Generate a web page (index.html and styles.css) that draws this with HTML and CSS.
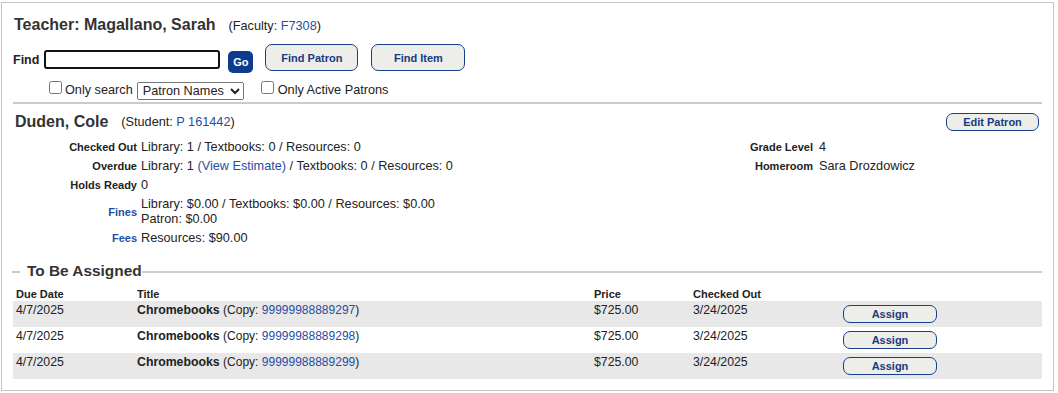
FILE: index.html
```html
<!DOCTYPE html>
<html>
<head>
<meta charset="utf-8">
<link rel="stylesheet" href="styles.css">
</head>
<body>
<div class="panel">
  <div class="head">
    <span class="head-name">Teacher: Magallano, Sarah</span>
    <span class="head-meta">(Faculty: <a class="link">F7308</a>)</span>
  </div>

  <div class="find-row">
    <label class="find-label">Find</label>
    <input class="find-input" type="text">
    <button class="go-btn">Go</button>
    <button class="btn btn-find">Find Patron</button>
    <button class="btn btn-find btn-item">Find Item</button>
  </div>

  <div class="opt-row">
    <input type="checkbox" class="cb cb-first">
    <span class="opt-text">Only search</span>
    <select class="opt-select"><option>Patron Names</option></select>
    <input type="checkbox" class="cb cb-second">
    <span class="opt-text">Only Active Patrons</span>
  </div>

  <div class="rule"></div>

  <div class="patron-head">
    <span class="patron-name">Duden, Cole</span>
    <span class="head-meta">(Student: <a class="link">P 161442</a>)</span>
    <button class="btn btn-edit">Edit Patron</button>
  </div>

  <div class="details">
    <div class="grid grid-left">
      <div class="lbl">Checked Out</div>
      <div class="val">Library: 1 / Textbooks: 0 / Resources: 0</div>
      <div class="lbl">Overdue</div>
      <div class="val">Library: 1 <a class="link">(View Estimate)</a> / Textbooks: 0 / Resources: 0</div>
      <div class="lbl">Holds Ready</div>
      <div class="val">0</div>
      <div class="lbl lbl-link">Fines</div>
      <div class="val">Library: $0.00 / Textbooks: $0.00 / Resources: $0.00<br>Patron: $0.00</div>
      <div class="lbl lbl-link">Fees</div>
      <div class="val">Resources: $90.00</div>
    </div>
    <div class="grid grid-right">
      <div class="lbl">Grade Level</div>
      <div class="val">4</div>
      <div class="lbl">Homeroom</div>
      <div class="val">Sara Drozdowicz</div>
    </div>
  </div>

  <div class="legend-row">
    <span class="legend-dash"></span>
    <span class="legend-text">To Be Assigned</span>
    <span class="legend-line"></span>
  </div>

  <table class="items">
    <colgroup>
      <col class="c-due"><col class="c-title"><col class="c-price"><col class="c-out"><col>
    </colgroup>
    <thead>
      <tr><th>Due Date</th><th>Title</th><th>Price</th><th>Checked Out</th><th></th></tr>
    </thead>
    <tbody>
      <tr class="shade">
        <td>4/7/2025</td>
        <td><b class="item-name">Chromebooks</b> <span class="copy">(Copy: <a class="link">99999988889297</a>)</span></td>
        <td>$725.00</td>
        <td>3/24/2025</td>
        <td class="act"><button class="btn btn-assign">Assign</button></td>
      </tr>
      <tr>
        <td>4/7/2025</td>
        <td><b class="item-name">Chromebooks</b> <span class="copy">(Copy: <a class="link">99999988889298</a>)</span></td>
        <td>$725.00</td>
        <td>3/24/2025</td>
        <td class="act"><button class="btn btn-assign">Assign</button></td>
      </tr>
      <tr class="shade">
        <td>4/7/2025</td>
        <td><b class="item-name">Chromebooks</b> <span class="copy">(Copy: <a class="link">99999988889299</a>)</span></td>
        <td>$725.00</td>
        <td>3/24/2025</td>
        <td class="act"><button class="btn btn-assign">Assign</button></td>
      </tr>
    </tbody>
  </table>
</div>
</body>
</html>
```

FILE: styles.css
```css
html, body {
  margin: 0;
  padding: 0;
  background: #fff;
}
body {
  font-family: "Liberation Sans", Arial, sans-serif;
  color: #222;
  font-size: 12.7px;
}
.panel {
  box-sizing: border-box;
  width: 1053px;
  margin: 2px 0 0 1px;
  border: 1px solid #c4c4c4;
  padding: 12px 11px 11px 12px;
}
.link {
  color: #1f4ea3;
  text-decoration: none;
}
.head {
  display: flex;
  align-items: baseline;
  gap: 13px;
  height: 20px;
  line-height: 20px;
}
.head-name, .patron-name {
  font-size: 16px;
  font-weight: bold;
  color: #333;
}
.head-meta {
  font-size: 12.7px;
  color: #222;
}

/* find row */
.find-row {
  display: flex;
  align-items: flex-start;
  margin-top: 9px;
  height: 28px;
}
.find-label {
  font-size: 12.5px;
  font-weight: bold;
  line-height: 15px;
  margin: 9px 0 0 -1px;
  color: #222;
}
.find-input {
  box-sizing: border-box;
  width: 176px;
  height: 19px;
  margin: 6px 0 0 5px;
  border: 2px solid #111;
  border-radius: 3px;
  padding: 0 3px;
  outline: none;
  font: 12.7px "Liberation Sans", Arial, sans-serif;
}
.go-btn {
  box-sizing: border-box;
  width: 25px;
  height: 22px;
  margin: 7px 0 0 8px;
  padding: 0;
  border: none;
  border-radius: 5px;
  background: #0d3c8e;
  color: #fff;
  font: bold 11px "Liberation Sans", Arial, sans-serif;
}
.btn {
  box-sizing: border-box;
  padding: 0;
  background: #ededea;
  border: 1px solid #173f8c;
  border-radius: 7px;
  color: #1a3a80;
  font: bold 11px "Liberation Sans", Arial, sans-serif;
}
.btn-find {
  width: 93px;
  height: 27px;
  margin-left: 12px;
}
.btn-item {
  width: 94px;
  margin-left: 13px;
}

/* options row */
.opt-row {
  display: flex;
  align-items: flex-start;
  margin-top: 8px;
  height: 20px;
  line-height: 20px;
}
.cb {
  box-sizing: border-box;
  width: 13px;
  height: 13px;
  margin: 1px 0 0 0;
}
.cb-first {
  margin-left: 35px;
}
.cb-second {
  margin-left: 17px;
}
.opt-text {
  margin-left: 3px;
  font-size: 12.7px;
  color: #222;
}
.cb-second + .opt-text {
  margin-left: 4px;
}
.opt-select {
  box-sizing: border-box;
  width: 107px;
  height: 18px;
  margin: 2px 0 0 4px;
  padding: 0 0 0 1px;
  font: 12.7px "Liberation Sans", Arial, sans-serif;
  color: #222;
}

.rule {
  height: 2px;
  background: #cbcbcb;
  margin: 2px 0 0 -1px;
}

/* patron header */
.patron-head {
  display: flex;
  align-items: center;
  margin-top: 9px;
  height: 18px;
  line-height: 20px;
}
.patron-name {
  margin-left: 1px;
  margin-right: 13px;
}
.btn-edit {
  width: 93px;
  height: 18px;
  margin-left: auto;
  margin-right: 3px;
}

/* details */
.details {
  display: flex;
  margin-top: 7px;
}
.grid {
  display: grid;
  align-content: start;
}
.grid-left {
  width: 726px;
  grid-template-columns: 123px auto;
  column-gap: 4px;
}
.grid-right {
  grid-template-columns: 73px auto;
  column-gap: 6px;
}
.lbl {
  align-self: center;
  text-align: right;
  font-size: 11px;
  font-weight: bold;
  color: #222;
  line-height: 15px;
}
.lbl-link {
  color: #1f4ea3;
}
.val {
  padding: 2px 0;
  line-height: 15px;
  font-size: 12.7px;
  color: #222;
}

/* legend */
.legend-row {
  display: flex;
  align-items: flex-start;
  margin-top: 13px;
  height: 20px;
}
.legend-dash {
  width: 8px;
  height: 2px;
  margin: 10px 0 0 -2px;
  background: #cccccc;
}
.legend-text {
  margin-left: 7px;
  font-size: 15.4px;
  font-weight: bold;
  color: #333;
  line-height: 20px;
}
.legend-line {
  flex: 1;
  height: 2px;
  margin-top: 10px;
  background: #cccccc;
}

/* table */
.items {
  width: 1029px;
  margin: 6px 0 0 -1px;
  border-collapse: collapse;
  table-layout: fixed;
}
.c-due { width: 124px; }
.c-title { width: 457px; }
.c-price { width: 99px; }
.c-out { width: 150px; }
.items th {
  text-align: left;
  padding: 0;
  height: 14px;
  line-height: 14px;
  font-size: 11px;
  font-weight: bold;
  color: #222;
}
.items th:first-child, .items td:first-child {
  padding-left: 3px;
}
.items td {
  height: 26px;
  box-sizing: border-box;
  padding: 2px 0 0 0;
  vertical-align: top;
  line-height: 15px;
  font-size: 12.3px;
  color: #222;
  white-space: nowrap;
}
.items tr.shade td {
  background: #e8e8e8;
}
.item-name {
  font-weight: bold;
  font-size: 12.3px;
}
.copy {
  font-size: 12px;
}
.items td.act {
  padding-top: 4px;
}
.btn-assign {
  display: block;
  width: 94px;
  height: 18px;
}
```
